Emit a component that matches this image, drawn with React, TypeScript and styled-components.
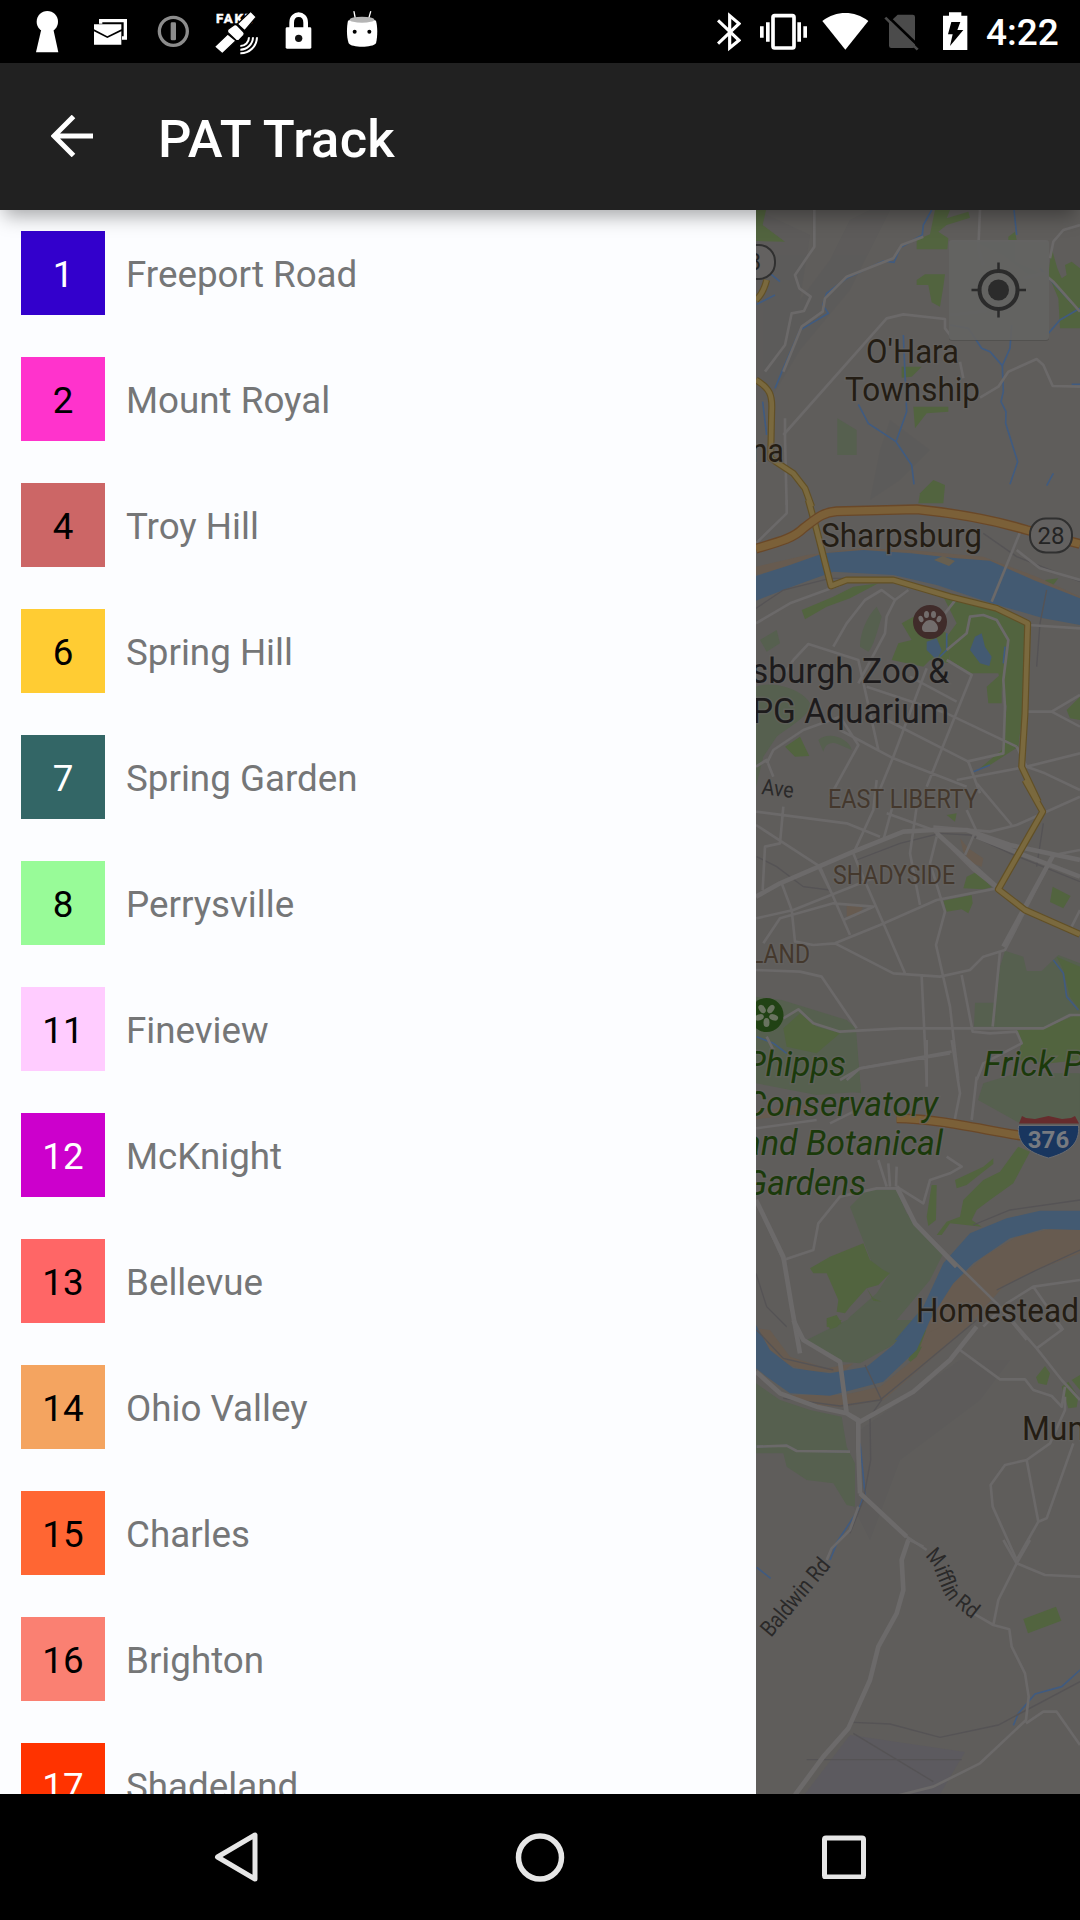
import React from "react";
import styled, { createGlobalStyle } from "styled-components";

const GlobalStyle = createGlobalStyle`
  * { box-sizing: border-box; }
  body { margin: 0; background: #000; font-family: Roboto, "Noto Sans", sans-serif; }
`;

const Screen = styled.div`
  width: 1080px;
  height: 1920px;
  display: flex;
  flex-direction: column;
  overflow: hidden;
  background: #000;
`;

const StatusBar = styled.div`
  height: 63px;
  flex: none;
  display: flex;
  justify-content: space-between;
  padding: 0 22px 0 35px;
`;

const StatusGroup = styled.div`
  display: flex;
`;

const Glyph = styled.svg<{ $w: number; $before?: number }>`
  display: block;
  flex: none;
  width: ${(p) => p.$w}px;
  height: 63px;
  margin-left: ${(p) => p.$before ?? 0}px;
`;

const Clock = styled.div`
  margin-left: 18px;
  width: 72px;
  padding-top: 1px;
  line-height: 63px;
  font-size: 37px;
  font-weight: 500;
  color: #fff;
  white-space: nowrap;
`;

const AppBar = styled.header`
  height: 147px;
  flex: none;
  display: flex;
  align-items: center;
  padding-left: 51px;
  background: #212121;
  position: relative;
  z-index: 1;
  box-shadow: 0 10px 18px -4px rgba(0, 0, 0, 0.34);
`;

const BackArrow = styled.svg`
  width: 42px;
  height: 42px;
  flex: none;
  margin-top: -2px;
`;

const Title = styled.h1`
  margin: 0 0 0 65px;
  padding-top: 4px;
  font-size: 52.5px;
  line-height: 62px;
  font-weight: 500;
  letter-spacing: 0.25px;
  color: #fff;
  white-space: nowrap;
`;

const Content = styled.main`
  flex: 1;
  min-height: 0;
  display: flex;
  overflow: hidden;
`;

const Drawer = styled.ul`
  width: 756px;
  flex: none;
  margin: 0;
  padding: 0;
  list-style: none;
  overflow: hidden;
  background: #fcfdff;
`;

const RouteRow = styled.li`
  height: 126px;
  display: flex;
  align-items: center;
  gap: 21px;
  padding-left: 21px;
`;

const Badge = styled.span<{ $bg: string; $light?: boolean }>`
  width: 84px;
  height: 84px;
  padding-top: 3px;
  flex: none;
  display: flex;
  align-items: center;
  justify-content: center;
  background: ${(p) => p.$bg};
  color: ${(p) => (p.$light ? "#fff" : "#000")};
  font-size: 36.75px;
`;

const RouteName = styled.span`
  padding-top: 3px;
  font-size: 36.75px;
  color: #757677;
  white-space: nowrap;
`;

const MapPane = styled.svg`
  display: block;
  width: 324px;
  height: 1584px;
  flex: none;
  background: #5f5d5b;
`;

const NavBar = styled.nav`
  height: 126px;
  flex: none;
  display: flex;
  justify-content: center;
  background: #000;
`;

const NavButton = styled.button`
  width: 304px;
  height: 126px;
  padding: 0;
  border: 0;
  background: none;
  display: flex;
  align-items: center;
  justify-content: center;
`;

type Route = { id: string; name: string; bg: string; light?: boolean };

const routes: Route[] = [
  { id: "1", name: "Freeport Road", bg: "#3300cc", light: true },
  { id: "2", name: "Mount Royal", bg: "#ff33cc" },
  { id: "4", name: "Troy Hill", bg: "#cc6666" },
  { id: "6", name: "Spring Hill", bg: "#ffcc33" },
  { id: "7", name: "Spring Garden", bg: "#336666", light: true },
  { id: "8", name: "Perrysville", bg: "#98fb98" },
  { id: "11", name: "Fineview", bg: "#ffccff" },
  { id: "12", name: "McKnight", bg: "#cc00cc", light: true },
  { id: "13", name: "Bellevue", bg: "#ff6666" },
  { id: "14", name: "Ohio Valley", bg: "#f4a460" },
  { id: "15", name: "Charles", bg: "#ff6633" },
  { id: "16", name: "Brighton", bg: "#fa8072" },
  { id: "17", name: "Shadeland", bg: "#ff3300", light: true },
];

/* Map geometry is stored in horizontal strips. Each strip starts at `top`
   and uses units of a third of a pixel. */
type Strip = { top: number; d: string[] };

const Strips = ({ data, ...rest }: { data: Strip[] } & React.SVGProps<SVGGElement>) => (
  <g {...rest}>
    {data.map((s, i) => (
      <g key={i} transform={`translate(750 ${s.top}) scale(0.33333)`}>
        {s.d.map((d, j) => (
          <path key={j} d={d} />
        ))}
      </g>
    ))}
  </g>
);

const softGreen: Strip[] = [
  { top: 205, d: ["M262 640L320 675V750H262Z", "M600 110H795V170L880 210L830 205L760 150L680 112Z"] },
  { top: 500, d: ["M18 560C70 540 160 570 180 610C190 640 120 680 80 710L40 770L18 860Z", "M380 320L395 350C380 400 370 440 355 455L330 440C330 400 350 350 380 320Z", "M205 720C240 690 300 720 305 750L270 735C240 720 225 735 220 755Z", "M30 420L80 390L90 430L50 455Z"] },
  { top: 780, d: ["M765 512L820 530L830 573H875L925 525L990 550V700L880 742H728L750 560Z", "M675 668H740V740H672Z", "M18 650L95 660L290 720L318 745L333 940L100 900L18 880Z"] },
  { top: 1040, d: ["M18 0H318L333 155L200 165L18 130Z", "M300 500L350 450H440L470 520L540 590L580 640L540 720L440 840L340 940L230 910L300 830L380 760L420 700L370 680Z", "M700 130L800 100H990V240L900 250H810L684 180Z"] },
  { top: 1320, d: ["M170 60L290 0H520L420 80L330 130L270 125Z", "M18 190L90 240L180 270L275 290L290 380L315 430V560L290 555L250 490L170 480L110 440L100 400H18Z"] },
];

const green: Strip[] = [
  { top: 205, d: ["M18 15H48L38 60L105 110L18 108Z", "M500 105L540 88L555 15H600L590 40L655 20L660 38L590 60L565 80L595 100L592 133H500Z", "M500 225L525 208H585L580 245L570 305L545 292L535 240L500 240Z", "M905 130L922 190L935 220L950 210L945 180L965 170L990 190V370H930L925 280L895 210Z", "M455 485L515 485L485 515L455 518Z", "M490 605H595V620L530 625L495 670Z", "M510 865L550 825L585 840L580 895H505Z", "M775 95L795 80L800 105H775Z"] },
  { top: 500, d: ["M105 740L150 710L178 768L135 770Z", "M155 330L250 290L310 260L385 250L300 295L230 320L165 358Z", "M580 290L620 295L740 330L830 370L832 520L805 740L720 795L690 805L755 750L770 620L745 520L660 520L600 480L590 410L620 370Z", "M455 370L500 345L590 400L600 490L540 480L520 500L425 480L445 430L485 420Z", "M885 240L925 235L900 268Z", "M950 630L990 590V660L960 655Z", "M710 560L755 520V610H715Z"] },
  { top: 780, d: ["M640 325L650 290L680 275L725 322L700 328Z", "M580 362L665 345L668 370L655 400L635 388L590 395Z", "M908 320L962 348L940 385L900 366Z", "M590 105L620 100L615 125Z", "M800 750L880 745L990 700V840L900 850L800 840L815 790Z", "M100 745L150 700L200 740L270 760L200 820L110 800Z", "M920 530L990 560V690L960 650L940 570Z"] },
  { top: 1040, d: ["M180 685L240 650L340 610L360 660L400 690L420 700L385 735L350 745L300 800L285 820L260 815L265 780L230 700L190 700Z", "M230 835L260 825L275 850L250 865L230 860Z", "M350 745L370 775L395 785L370 782Z", "M545 435H560L558 540L535 558L530 530Z", "M805 320L840 335L790 430L720 480L680 510L665 540L695 560L600 550L575 585H560L590 545L630 530L640 480L700 420L750 395Z", "M615 420L700 380L730 355V372L700 395L650 435L620 445Z"] },
  { top: 1320, d: ["M230 0H275L262 20L240 28Z", "M475 120L490 70L525 30L545 35L520 80L490 132Z", "M858 172L885 138L900 160L890 195L865 190Z", "M935 200L955 185L985 230L980 262L955 265Z", "M965 180L990 165V210Z"] },
  { top: 1540, d: ["M820 237L918 200L934 242L834 280Z"] },
];

const sand: Strip[] = [
  { top: 500, d: ["M18 200L170 165L330 145L480 150L700 170L860 230L990 290V310L870 260L700 190L480 158L300 155L18 225Z"] },
  { top: 780, d: ["M630 175L655 205L700 235L695 260L665 250L640 215Z", "M290 370L340 375L330 405L290 410Z"] },
  { top: 1040, d: ["M540 840L600 740L700 650L800 590L900 567H990V640L860 690L760 740L670 840L560 920H510Z", "M18 215L180 190L200 215L18 238Z"] },
  { top: 1320, d: ["M100 225L280 225L390 200L500 110L540 35L620 0H680L600 70L400 240L270 262L150 250Z", "M20 25L70 120L180 155L280 155L310 130L230 145L120 110L60 30Z"] },
];

const water: Strip[] = [
  { top: 500, d: ["M18 228L120 195L220 160L340 150L480 160L620 175L720 182L850 240L990 295V375L880 355L720 308L560 255L430 225L250 215L140 255L18 302Z", "M530 425L560 415L575 450L560 480L530 450Z", "M660 450L675 410L695 400L705 440L725 470L718 498L690 490Z"] },
  { top: 1040, d: ["M520 800L580 670L660 580L770 535L870 512H990V570L880 567L780 595L670 670L610 730L540 840L470 900H435Z"] },
  { top: 1320, d: ["M18 15L60 90L130 145L240 160L350 140L430 75L490 0H540L500 90L400 185L240 227L120 220L50 170L18 145Z"] },
];

const streams: Strip[] = [
  { top: 205, d: ["M545 15L520 60L517 90L450 128L432 172L400 168L290 220L230 265L218 300L235 325L150 375L100 490L75 550", "M792 15L800 90", "M325 598L355 655L438 710L485 780L492 838", "M438 710L470 620L460 390", "M600 360L655 370L695 430L720 440L757 482L780 430L785 360", "M757 482L760 560L753 590L768 620L767 655L803 770L780 838", "M895 385L930 345L990 310", "M38 590L50 690", "M910 805L890 842", "M20 298L75 270M60 205L90 230", "M870 190L925 250L990 320M965 538H990"] },
  { top: 500, d: ["M590 400V450L570 470M765 440L760 490M720 795L670 815"] },
  { top: 780, d: ["M910 540L940 580L950 650L985 690", "M20 770L70 790L110 820"] },
  { top: 1320, d: ["M20 380L110 377L140 393L300 395M330 370L345 520L325 570L245 690"] },
  { top: 1540, d: ["M20 82L62 115M265 0L240 60", "M990 390L935 440L855 462L805 520L790 556"] },
];

const rail: Strip[] = [
  { top: 500, d: ["M18 325L100 270L240 235L440 235", "M890 270L870 370L860 500", "M700 100L800 170L990 245"] },
  { top: 780, d: ["M20 230L80 260L160 320L240 330M320 240L450 190L570 160L660 165L780 220L990 305M880 130L860 260"] },
  { top: 1040, d: ["M18 700L50 800L110 860M670 555L780 510L990 480M990 630L860 690L740 750"] },
  { top: 1320, d: ["M100 235L270 258L390 240L500 150L680 0", "M345 135L395 240L360 290L362 420L340 540L300 640", "M20 30L100 115L250 150"] },
  { top: 1540, d: ["M310 547L420 552L570 592L745 555L990 425", "M170 659H635M310 580L550 725"] },
];

const minorRoads: Strip[] = [
  { top: 205, d: ["M193 15V125L135 210L148 250L182 275L162 318L125 325L105 420L45 500", "M100 500L155 365L218 320L225 280L290 215L430 160L455 120L520 95", "M100 690L410 340L460 328L585 342V370L600 390M600 330L710 318", "M690 15L685 130L700 180M630 470L640 520M690 578L745 545L775 500L860 462L880 480L908 543L990 545", "M990 60L940 75L910 110L900 160M820 220L880 205L910 230L990 320", "M105 640V700L110 900"] },
  { top: 500, d: ["M110 0V40L18 130", "M815 85L725 305", "M990 240L870 205L800 150", "M18 370L120 310L270 255M250 440L290 370L345 300L395 270L435 300L475 270M435 300L410 350L405 400L325 550M130 480L175 432L325 480L385 750M90 545L130 480M530 505L430 770L385 880M590 480L665 525L530 860M480 530L620 605M350 560L590 640L800 740M410 660L655 785M270 690L430 775L650 860M50 790L70 750L160 690L270 650L325 735L240 890M18 800L50 780L70 830M655 785L690 880M650 785L760 760L765 620L760 540L775 420L740 360L700 345L660 350L650 400L590 450M620 295L585 340", "M835 375L990 385M830 635H905L990 585M905 635L990 680M800 740L830 800L885 820L990 870M620 840L830 800L990 760"] },
  { top: 780, d: ["M18 95L290 130L390 170M100 80L90 190L45 200L38 330M18 135L210 260L300 465M380 0L370 90L310 220L330 270L400 430L465 580M410 100L550 150M430 70L400 180M500 80L480 220L510 375M560 170L540 250L585 395L558 495L600 680L625 900M650 90L678 150L645 225M680 10L785 135M990 50L800 135L720 155L550 140M18 415L130 390L380 290M40 490L90 415L250 370L370 380L280 420M95 310L125 390L135 485L190 495L255 490L430 580L570 590L660 570L700 530L765 510L910 225L990 210M205 260L250 350M18 570L150 575L215 590L320 745M255 490L390 435L560 360L740 325M515 590L530 900M635 585L668 755L720 760L800 755L815 790L700 850L680 900M750 515L728 740M100 715L145 688L190 730L270 755L450 745H880L960 705H990M270 900L330 865L600 820M990 390L965 440M740 325L670 270L550 150M50 770L70 810"] },
  { top: 1040, d: ["M530 0V140M605 0L630 160L610 260M680 110L665 240M290 120L330 85L605 35M18 480L100 660L190 630L205 550L270 470L380 445H440M385 360L410 440M415 370L420 440M440 380L438 440M440 440L520 490L540 420L600 400L635 380L590 350M440 440L495 550L740 790L830 900M990 720L850 740L770 790L700 860M850 740L940 870", "M240 250L330 205M18 265L200 240"] },
  { top: 1320, d: ["M785 0L860 85L935 180L990 240M860 85L935 30L910 0M630 90L750 178H825L850 210L905 228L935 260L945 200M945 230V270L900 370L830 420L765 435L722 495L728 560L800 720L865 605L830 420M865 605L890 595L970 370", "M20 380L110 377L140 393L300 395", "M330 520L470 650L530 690M475 655L455 720M325 560L300 630L245 685L230 720"] },
  { top: 1540, d: ["M480 0L520 20M760 0L800 70L885 105L990 110M800 70L840 0M800 70L745 180L730 255M670 220L730 255L778 268L785 320L825 400L836 470L828 540L690 670L550 740L430 770M828 550L880 515H920L990 615"] },
];

const majorRoads: Strip[] = [
  { top: 780, d: ["M18 350L90 310L310 215L460 155L550 150L650 150L780 195L990 240M560 160L740 320M680 170L990 290M760 500L910 225"] },
  { top: 1040, d: ["M18 480L100 650L125 800L150 940M440 440L495 550L620 680"] },
  { top: 1320, d: ["M130 0L160 60L270 125L290 280L325 300V390L330 520M18 155L90 220L200 260L290 280L330 305L490 215L600 120L680 20M330 520L470 650"] },
  { top: 1540, d: ["M475 0L455 60L460 150L440 220L385 320L360 420L295 565L220 650L135 765"] },
];

const yellowRoads: Strip[] = [
  { top: 205, d: ["M18 525C60 550 68 570 65 620L62 760L130 805L165 850L185 905", "M18 285C35 270 45 245 50 225"] },
  { top: 500, d: ["M175 0L200 90L243 258L290 240H430L600 290L740 325L833 370L825 640L815 800L865 905"] },
  { top: 780, d: ["M825 0L878 95L745 328L825 390L990 463"] },
];

const orangeRoads: Strip[] = [
  { top: 500, d: ["M18 146C90 125 130 115 160 85C200 55 215 38 260 34L500 28C620 40 730 60 830 90L990 132"] },
  { top: 1040, d: ["M440 235C560 235 700 270 820 288"] },
];

type Label = { x: number; y: number; w: number; size: number; text: string; fill: string; italic?: boolean };

const town = "#241d14";
const district = "#44382d";
const park = "#1b3a0b";

const labels: Label[] = [
  { x: 866, y: 363, w: 93, size: 34, text: "O'Hara", fill: town },
  { x: 845, y: 401, w: 135, size: 34, text: "Township", fill: town },
  { x: 751, y: 462, w: 33, size: 34, text: "na", fill: town },
  { x: 821, y: 547, w: 161, size: 34, text: "Sharpsburg", fill: town },
  { x: 751, y: 683, w: 198, size: 35, text: "sburgh Zoo &", fill: "#1d1b1c" },
  { x: 752, y: 723, w: 197, size: 35, text: "PG Aquarium", fill: "#1d1b1c" },
  { x: 828, y: 808, w: 150, size: 26, text: "EAST LIBERTY", fill: district },
  { x: 833, y: 884, w: 122, size: 26, text: "SHADYSIDE", fill: district },
  { x: 751, y: 963, w: 59, size: 26, text: "LAND", fill: district },
  { x: 745, y: 1076, w: 101, size: 35, text: "Phipps", fill: park, italic: true },
  { x: 745, y: 1116, w: 193, size: 35, text: "Conservatory", fill: park, italic: true },
  { x: 743, y: 1155, w: 200, size: 35, text: "and Botanical", fill: park, italic: true },
  { x: 745, y: 1195, w: 121, size: 35, text: "Gardens", fill: park, italic: true },
  { x: 983, y: 1076, w: 101, size: 35, text: "Frick P", fill: park, italic: true },
  { x: 916, y: 1322, w: 163, size: 34, text: "Homestead", fill: town },
  { x: 1022, y: 1440, w: 63, size: 34, text: "Mun", fill: town },
];

const CityMap = () => (
  <MapPane viewBox="756 210 324 1584">
    <g opacity="0.2" fill="#55565a">
      <path d="M756 210L810 235L800 300L830 260L850 220L870 210H890L850 290L800 350L770 400H756Z" />
      <path d="M890 420L930 450L900 480L870 500L880 450Z" />
      <path d="M860 1430L960 1360L1010 1360L980 1400L900 1460L870 1540L850 1500Z" />
    </g>
    <path d="M805 1794L850 1735L965 1752L940 1794Z" fill="#5c5a5f" />
    <Strips data={softGreen} fill="#56604f" />
    <Strips data={green} fill="#52643f" />
    <Strips data={sand} fill="#675b50" />
    <Strips data={water} fill="#435a72" />
    <path d="M934 560L943 556L955 561L949 566Z" fill="#675f50" />
    <Strips data={streams} fill="none" stroke="#405b80" strokeWidth="5" />
    <Strips data={rail} fill="none" stroke="#555355" strokeWidth="4" />
    <Strips data={minorRoads} fill="none" stroke="#6b6969" strokeWidth="8" strokeLinejoin="round" />
    <Strips data={majorRoads} fill="none" stroke="#6c6a6a" strokeWidth="14" strokeLinejoin="round" />
    <Strips data={yellowRoads} fill="none" stroke="#625026" strokeWidth="21" strokeLinejoin="round" />
    <Strips data={yellowRoads} fill="none" stroke="#7a693e" strokeWidth="14" strokeLinejoin="round" />
    <Strips data={orangeRoads} fill="none" stroke="#6a4828" strokeWidth="30" />
    <Strips data={orangeRoads} fill="none" stroke="#7b6038" strokeWidth="22" />

    <rect x="738" y="245" width="37" height="34" rx="16" fill="#636160" stroke="#303030" strokeWidth="2" />
    <text x="748" y="270" fontSize="23" fill="#242424">8</text>
    <rect x="1030" y="518.500" width="42" height="34" rx="16" fill="#636160" stroke="#303030" strokeWidth="2" />
    <text x="1051" y="544" fontSize="24" textAnchor="middle" fill="#242424">28</text>

    <g>
      <circle cx="930" cy="622" r="17" fill="#402c2a" />
      <g fill="#726d6c">
        <ellipse cx="921" cy="619" rx="2.300" ry="3.200" transform="rotate(-25 921 619)" />
        <ellipse cx="926.500" cy="614.500" rx="2.500" ry="3.500" />
        <ellipse cx="933.500" cy="614.500" rx="2.500" ry="3.500" />
        <ellipse cx="939" cy="619" rx="2.300" ry="3.200" transform="rotate(25 939 619)" />
        <path d="M930 620C925 620 922 625 922 628C922 633 927 632 930 632C933 632 938 633 938 628C938 625 935 620 930 620Z" />
      </g>
    </g>
    <g>
      <circle cx="766.500" cy="1015" r="17" fill="#214214" />
      <g fill="#69735f">
        {[36, 108, 180, 252, 324].map((a) => (
          <ellipse key={a} cx="766.500" cy="1007.500" rx="3" ry="4.600" transform={`rotate(${a} 766.500 1015)`} />
        ))}
      </g>
    </g>
    <g>
      <path d="M1018.500 1125.500H1078.500C1080 1143 1070 1152 1048.500 1158C1027 1152 1017 1143 1018.500 1125.500Z" fill="#19365f" stroke="#696b70" strokeWidth="1" />
      <path d="M1022 1116L1026 1118L1035 1119L1048.500 1116L1062 1119L1071 1118L1075 1116L1079 1123.500H1019Z" fill="#662c2d" />
      <text x="1048.500" y="1147.500" fontSize="24" fontWeight="700" textAnchor="middle" fill="#777a80">376</text>
    </g>

    {labels.map((l) => (
      <text
        key={l.text}
        x={l.x}
        y={l.y}
        fontSize={l.size}
        fontStyle={l.italic ? "italic" : "normal"}
        textLength={l.w}
        lengthAdjust="spacingAndGlyphs"
        fill={l.fill}
        stroke="#656361"
        strokeWidth="3"
        strokeOpacity="0.6"
        paintOrder="stroke"
      >
        {l.text}
      </text>
    ))}
    <g fill="#2a2929" fontSize="22">
      <text transform="translate(761 794) rotate(7)" textLength="32" lengthAdjust="spacingAndGlyphs">Ave</text>
      <text transform="translate(771 1638) rotate(-50)" fontSize="23" textLength="94" lengthAdjust="spacingAndGlyphs">Baldwin Rd</text>
      <text transform="translate(925 1556) rotate(48)" textLength="16" lengthAdjust="spacingAndGlyphs">M</text>
      <text transform="translate(934 1569) rotate(68)" textLength="26" lengthAdjust="spacingAndGlyphs">iffli</text>
      <text transform="translate(944 1594) rotate(54)" textLength="10" lengthAdjust="spacingAndGlyphs">n</text>
      <text transform="translate(954 1605) rotate(38)" textLength="23" lengthAdjust="spacingAndGlyphs">Rd</text>
    </g>

    <rect x="949" y="242" width="100" height="99" rx="3" fill="#3c3b3a" opacity="0.35" />
    <rect x="949" y="240" width="100" height="100" rx="3" fill="#646463" fillOpacity="0.93" />
    <g stroke="#2b2b2b" fill="none">
      <circle cx="998.500" cy="290" r="19" strokeWidth="4" />
      <path d="M998.500 262.500V272M998.500 308V317.500M971.500 290H981M1016.500 290H1026" strokeWidth="2.500" />
      <circle cx="998.500" cy="290" r="10.500" fill="#2b2b2b" stroke="none" />
    </g>
  </MapPane>
);

const StatusIcons = () => (
  <StatusBar>
    <StatusGroup>
      <Glyph $w={25} viewBox="105 0 75 189" fill="#fff">
        <circle cx="142" cy="65" r="32" />
        <path d="M124 88H160L175 157H108Z" />
      </Glyph>
      <Glyph $w={35} $before={33} viewBox="279 0 105 189" fill="#fff">
        <path d="M297 57H381V119H366V109H371V67H307V71H297Z" />
        <path d="M282 73H364V88L322 109L282 88Z" />
        <path d="M282 94L322 114L364 94V134H282Z" />
      </Glyph>
      <Glyph $w={34} $before={28} viewBox="468 0 102 189">
        <circle cx="520" cy="94" r="42" fill="none" stroke="#8c8c8c" strokeWidth="10" />
        <rect x="512" y="67" width="16" height="54" rx="4" fill="#8c8c8c" />
      </Glyph>
      <Glyph $w={46} $before={23} viewBox="639 0 138 189" fill="#fff">
        <text x="648" y="68" fontSize="40" fontWeight="700" textLength="108" stroke="#fff" strokeWidth="1.500">FAKE</text>
        <g stroke="#000" strokeWidth="4">
          <path d="M643 140L683 102L708 122L667 161Z" />
          <path d="M712 72L752 34L769 51L734 92Z" />
          <path d="M684 88L702 75Q708 72 713 77L731 96Q735 101 731 106L718 120Q713 124 707 120L684 98Q680 93 684 88Z" />
        </g>
        <g fill="none" stroke="#fff" strokeWidth="6">
          <path d="M747 112A26 26 0 0 1 721 138" />
          <path d="M759 112A38 38 0 0 1 721 149" />
          <path d="M771 112A49 49 0 0 1 721 160" />
        </g>
      </Glyph>
      <Glyph $w={28} $before={25} viewBox="852 0 84 189">
        <path d="M875 86V68C875 36 917 36 917 68V86" fill="none" stroke="#fff" strokeWidth="14" />
        <rect x="857" y="82" width="77" height="64" rx="4" fill="#fff" />
        <circle cx="896" cy="115" r="11" fill="#111" />
      </Glyph>
      <Glyph $w={32} $before={34} viewBox="1038 0 96 189">
        <path d="M1062 35L1066 56M1112 35L1106 56" stroke="#fff" strokeWidth="4" strokeLinecap="round" />
        <path d="M1044 62C1060 54 1112 54 1128 62C1133 80 1133 108 1128 130C1118 144 1054 144 1046 130C1039 108 1040 80 1044 62Z" fill="#fff" />
        <ellipse cx="1086" cy="59" rx="37" ry="9" fill="#b5b5b5" />
        <circle cx="1064" cy="95" r="6" fill="#000" />
        <circle cx="1108" cy="95" r="6" fill="#000" />
      </Glyph>
    </StatusGroup>
    <StatusGroup>
      <Glyph $w={24} viewBox="81 0 72 189">
        <path d="M84 61L147 121L119 144V47L147 71L84 131" fill="none" stroke="#fff" strokeWidth="9.500" />
      </Glyph>
      <Glyph $w={49} $before={18} viewBox="207 0 147 189" fill="#fff">
        <rect x="249" y="47" width="63" height="97" rx="5" fill="none" stroke="#fff" strokeWidth="11" />
        <path d="M210 79H221V113H210ZM228 67H239V125H228ZM322 67H333V125H322ZM340 79H351V113H340Z" />
      </Glyph>
      <Glyph $w={48} $before={13} viewBox="393 0 144 189" fill="#fff">
        <path d="M466 149L397 63C440 31 492 31 535 63Z" />
      </Glyph>
      <Glyph $w={35} $before={15} viewBox="582 0 105 189">
        <path d="M597 68L623 44H668Q675 44 675 51V137Q675 144 668 144H604Q597 144 597 137Z" fill="#4b4b4b" />
        <path d="M590 46L690 142" stroke="#000" strokeWidth="8" />
        <path d="M586 53L683 149" stroke="#4b4b4b" strokeWidth="8" />
      </Glyph>
      <Glyph $w={26} $before={23} viewBox="756 0 78 189">
        <path d="M759 47H777V37H814V47H832V150H759Z" fill="#fff" />
        <path d="M784 66H811L802 90H820L780 138L788 103H774Z" fill="#000" />
      </Glyph>
      <Clock>4:22</Clock>
    </StatusGroup>
  </StatusBar>
);

export default function App() {
  return (
    <Screen>
      <GlobalStyle />
      <StatusIcons />
      <AppBar>
        <BackArrow viewBox="0 0 42 42" fill="none" stroke="#fff" strokeWidth="5">
          <path d="M42 21H3M22.500 1.500L3 21L22.500 40.500" />
        </BackArrow>
        <Title>PAT Track</Title>
      </AppBar>
      <Content>
        <Drawer>
          {routes.map((r) => (
            <RouteRow key={r.id}>
              <Badge $bg={r.bg} $light={r.light}>{r.id}</Badge>
              <RouteName>{r.name}</RouteName>
            </RouteRow>
          ))}
        </Drawer>
        <CityMap />
      </Content>
      <NavBar>
        <NavButton aria-label="Back">
          <svg width="44" height="50" viewBox="0 0 44 50" fill="none" stroke="#e6e6e6" strokeWidth="5" strokeLinejoin="round">
            <path d="M41 3V47L3.500 25Z" />
          </svg>
        </NavButton>
        <NavButton aria-label="Home">
          <svg width="50" height="50" viewBox="0 0 50 50" fill="none" stroke="#e6e6e6" strokeWidth="5.500">
            <circle cx="25" cy="25.500" r="21.500" />
          </svg>
        </NavButton>
        <NavButton aria-label="Recents">
          <svg width="44" height="44" viewBox="0 0 44 44" fill="none" stroke="#e6e6e6" strokeWidth="5">
            <rect x="2.500" y="3" width="39" height="39" rx="1.500" />
          </svg>
        </NavButton>
      </NavBar>
    </Screen>
  );
}
